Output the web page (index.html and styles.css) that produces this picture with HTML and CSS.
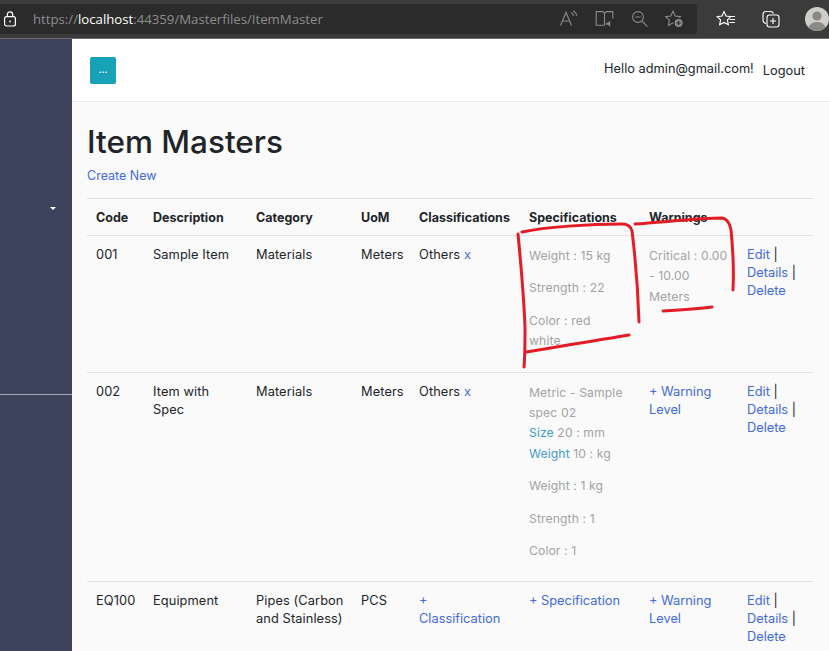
FILE: index.html
```html
<!DOCTYPE html>
<html lang="en">
<head>
  <meta charset="UTF-8" />
  <title>Item Masters</title>
  <link rel="stylesheet" href="styles.css">
</head>
<body>
  <header class="browser-bar">
    <div class="address-field">
      <svg class="lock-icon" width="14" height="16" viewBox="0 0 14 16" fill="none" stroke="#fff" stroke-width="1.2">
        <rect x="1.6" y="5.6" width="10.8" height="9.4" rx="2" />
        <path d="M4.3 5.6V3.6a2.7 2.7 0 0 1 5.4 0v2" />
        <circle cx="7" cy="10.4" r="0.9" fill="#fff" stroke="none" />
      </svg>
      <span class="url"><span class="url-host-dim">https://</span><span class="url-host">localhost</span>:44359/Masterfiles/ItemMaster</span>
      <div class="address-icons">
        <svg width="20" height="18" viewBox="0 0 20 18" fill="none" stroke="#8a8a8a" stroke-width="1.1">
          <path d="M1.5 15.5 7 2.5l5.5 13M3.4 11h7.2" />
          <path d="M12 2.5c1.6.7 2.4 1.9 2.6 3.4M14 .8c2.2 1 3.5 2.8 3.7 5" />
        </svg>
        <svg width="20" height="18" viewBox="0 0 20 18" fill="none" stroke="#8a8a8a" stroke-width="1.1">
          <path d="M9.5 3 8 1.6H1.2v13.6h8.3V3l2-1.4h6.3v7" />
          <path d="M11 12.8h1.8l2.4-2v6l-2.4-2H11z" fill="#8a8a8a" stroke="none" />
        </svg>
        <svg width="18" height="18" viewBox="0 0 18 18" fill="none" stroke="#8a8a8a" stroke-width="1.1">
          <circle cx="7" cy="7" r="5.4" />
          <path d="M4.4 7h5.2M11 11l5.4 5.6" />
        </svg>
        <svg width="20" height="18" viewBox="0 0 20 18" fill="none" stroke="#8a8a8a" stroke-width="1.1">
          <path d="M8 1.2 10.2 6l5.2.7-3.800 3.500 1 5.200L8 12.800l-4.600 2.600 1-5.200L.6 6.700 5.800 6z" />
          <circle cx="13.6" cy="13" r="4.6" fill="#8a8a8a" stroke="#2b2b2b" />
          <path d="M13.6 10.800v4.400M11.400 13h4.400" stroke="#2b2b2b" />
        </svg>
      </div>
    </div>
    <div class="browser-icons">
      <svg width="20" height="18" viewBox="0 0 20 18" fill="none" stroke="#fff" stroke-width="1.1">
        <path d="M8 1.500 10 6l4.800.6-3.400 3.300 1 4.900L8 12.400l-4.400 2.400 1-4.900L1.200 6.600 6 6z" />
        <path d="M13 6.500h6M13.600 9.500H19M13.600 12.500H19" />
      </svg>
      <svg width="18" height="18" viewBox="0 0 18 18" fill="none" stroke="#fff" stroke-width="1.1">
        <path d="M4 13.500C2 13 1 12 1 10V4.500C1 2.500 2 1.500 4 1.500h4.500c1.500 0 2.500.7 3 2" />
        <rect x="5" y="5" width="12" height="12" rx="2.4" />
        <path d="M11 8v6M8 11h6" />
      </svg>
      <svg class="avatar" width="24" height="24" viewBox="0 0 24 24">
        <circle cx="12" cy="12" r="12" fill="#cfcdc9" />
        <circle cx="12" cy="9" r="4.6" fill="#8b8985" />
        <path d="M3.500 20.500c1.500-4 5-5.500 8.500-5.500s7 1.500 8.500 5.500a12 12 0 0 1-17 0z" fill="#8b8985" />
      </svg>
    </div>
  </header>

  <div class="layout">
    <aside class="sidebar">
      <span class="sidebar-caret"></span>
      <div class="sidebar-rule"></div>
    </aside>

    <div class="main">
      <nav class="navbar">
        <button class="menu-button">...</button>
        <div class="nav-user">
          <span class="hello">Hello admin@gmail.com!</span>
          <a class="logout">Logout</a>
        </div>
      </nav>

      <main class="content">
        <h1>Item Masters</h1>
        <a class="link create-link">Create New</a>

        <table class="items">
          <colgroup>
            <col class="col-code" />
            <col class="col-desc" />
            <col class="col-cat" />
            <col class="col-uom" />
            <col class="col-class" />
            <col class="col-spec" />
            <col class="col-warn" />
            <col class="col-actions" />
          </colgroup>
          <thead>
            <tr>
              <th>Code</th>
              <th>Description</th>
              <th>Category</th>
              <th>UoM</th>
              <th>Classifications</th>
              <th>Specifications</th>
              <th>Warnings</th>
              <th></th>
            </tr>
          </thead>
          <tbody>
            <tr>
              <td>001</td>
              <td>Sample Item</td>
              <td>Materials</td>
              <td>Meters</td>
              <td>Others <a class="link">x</a></td>
              <td>
                <p class="muted">Weight : 15 kg</p>
                <p class="muted">Strength : 22</p>
                <p class="muted">Color : red<br>white</p>
              </td>
              <td><p class="muted">Critical : 0.00 - 10.00 Meters</p></td>
              <td><a class="link">Edit</a> |<br><a class="link">Details</a> |<br><a class="link">Delete</a></td>
            </tr>
            <tr>
              <td>002</td>
              <td>Item with Spec</td>
              <td>Materials</td>
              <td>Meters</td>
              <td>Others <a class="link">x</a></td>
              <td>
                <p class="muted">Metric - Sample spec 02<br><a class="spec-link">Size</a> 20 : mm<br><a class="spec-link">Weight</a> 10 : kg</p>
                <p class="muted">Weight : 1 kg</p>
                <p class="muted">Strength : 1</p>
                <p class="muted">Color : 1</p>
              </td>
              <td><a class="link">+ Warning Level</a></td>
              <td><a class="link">Edit</a> |<br><a class="link">Details</a> |<br><a class="link">Delete</a></td>
            </tr>
            <tr>
              <td>EQ100</td>
              <td>Equipment</td>
              <td class="cat-cell">Pipes (Carbon<br>and Stainless)</td>
              <td>PCS</td>
              <td><a class="link">+ Classification</a></td>
              <td><a class="link">+ Specification</a></td>
              <td><a class="link">+ Warning Level</a></td>
              <td><a class="link">Edit</a> |<br><a class="link">Details</a> |<br><a class="link">Delete</a></td>
            </tr>
          </tbody>
        </table>
      </main>
    </div>
  </div>

  <!-- hand drawn marks on top of the screenshot -->
  <svg class="scribbles" width="829" height="651" viewBox="0 0 829 651" fill="none" stroke="#e21d25" stroke-width="3" stroke-linecap="round" stroke-linejoin="round">
    <path d="M522 232C545 227 590 224 622 224C629 224 631 227 632 231C635 255 638 290 639 322" />
    <path d="M518 234C521 265 524 300 525 328C525 345 525 356 524 367" />
    <path d="M526 352C560 346 600 340 629 335" />
    <path d="M635 224C665 222 700 218 722 218C728 219 730 224 731 230C733 250 734 270 733 290" />
    <path d="M663 311C680 310 697 309 712 307" />
  </svg>
</body>
</html>
```

FILE: styles.css
```css
* {
  box-sizing: border-box;
}

html,
body {
  height: 100%;
}

body {
  margin: 0;
  display: flex;
  flex-direction: column;
  overflow: hidden;
  font-family: Inter, "Open Sans", sans-serif;
  font-size: 12.8px;
  line-height: 18px;
  letter-spacing: 0.1px;
  color: #212529;
  background: #fafafa;
}

.browser-bar {
  flex: none;
  display: flex;
  height: 39px;
  padding-top: 4px;
  background: #3b3b3b;
  border-bottom: 1px solid #6a6a6a;
}

.address-field {
  display: flex;
  align-items: center;
  width: 700px;
  height: 30px;
  background: #2b2b2b;
  border-radius: 0 4px 4px 0;
}

.lock-icon {
  margin-left: 3px;
}

.url {
  margin-left: 16px;
  font-family: "Open Sans", sans-serif;
  font-size: 13.2px;
  letter-spacing: 0;
  color: #8d8d8d;
}

.url-host {
  color: #fff;
}

.address-icons {
  display: flex;
  align-items: center;
  gap: 16px;
  margin-left: auto;
  margin-right: 12px;
}

.browser-icons {
  display: flex;
  align-items: center;
  gap: 26px;
  margin-left: 19px;
  height: 30px;
}

.avatar {
  margin-left: -1px;
}

.layout {
  flex: 1;
  display: flex;
  min-height: 0;
}

.sidebar {
  position: relative;
  flex: none;
  width: 72px;
  background: #3d435c;
}

.sidebar-caret {
  position: absolute;
  left: 50px;
  top: 168px;
  width: 0;
  height: 0;
  border-top: 3px solid #fff;
  border-left: 3px solid transparent;
  border-right: 3px solid transparent;
}

.sidebar-rule {
  position: absolute;
  left: 0;
  right: 0;
  top: 355px;
  height: 1px;
  background: #a5a8b3;
}

.main {
  flex: 1;
  min-width: 0;
}

.navbar {
  display: flex;
  align-items: center;
  justify-content: space-between;
  height: 63px;
  padding: 0 24px 0 18px;
  background: #fff;
  border-bottom: 1px solid #ececec;
}

.menu-button {
  width: 26px;
  height: 27px;
  padding: 0 0 2px;
  border: none;
  border-radius: 2px;
  font: 700 9px Inter, sans-serif;
  color: #fff;
  background: #17a2b8;
}

.nav-user {
  display: flex;
  align-items: baseline;
  gap: 9px;
  margin-bottom: 2px;
  letter-spacing: 0;
}

.logout {
  position: relative;
  top: 2px;
}

.content {
  padding: 19px 16px 0 15px;
}

h1 {
  margin: 0 0 5px;
  font-size: 31.5px;
  line-height: 41px;
  font-weight: 500;
  letter-spacing: 0;
}

.link {
  color: #4169e1;
  letter-spacing: 0;
}

.create-link {
  display: block;
  margin-bottom: 13px;
  font-size: 12.5px;
}

.items {
  width: 726px;
  table-layout: fixed;
  border-collapse: collapse;
}

.col-code { width: 57px; }
.col-desc { width: 103px; }
.col-cat { width: 105px; }
.col-uom { width: 58px; }
.col-class { width: 110px; }
.col-spec { width: 120px; }
.col-warn { width: 98px; }
.col-actions { width: 75px; }

th,
td {
  padding: 10px 9px 8px;
  text-align: left;
  vertical-align: top;
  border-top: 1px solid #dee2e6;
}

th {
  font-size: 12.5px;
  font-weight: 700;
  letter-spacing: 0;
  border-bottom: 1px solid #dee2e6;
}

.cat-cell {
  padding-right: 0;
}

.muted {
  margin: 0 0 12px;
  font-size: 12.2px;
  line-height: 20.4px;
  color: #a3a3a3;
}

.spec-link {
  color: #3f9bd0;
}

.scribbles {
  position: absolute;
  left: 0;
  top: 0;
  pointer-events: none;
}
```
